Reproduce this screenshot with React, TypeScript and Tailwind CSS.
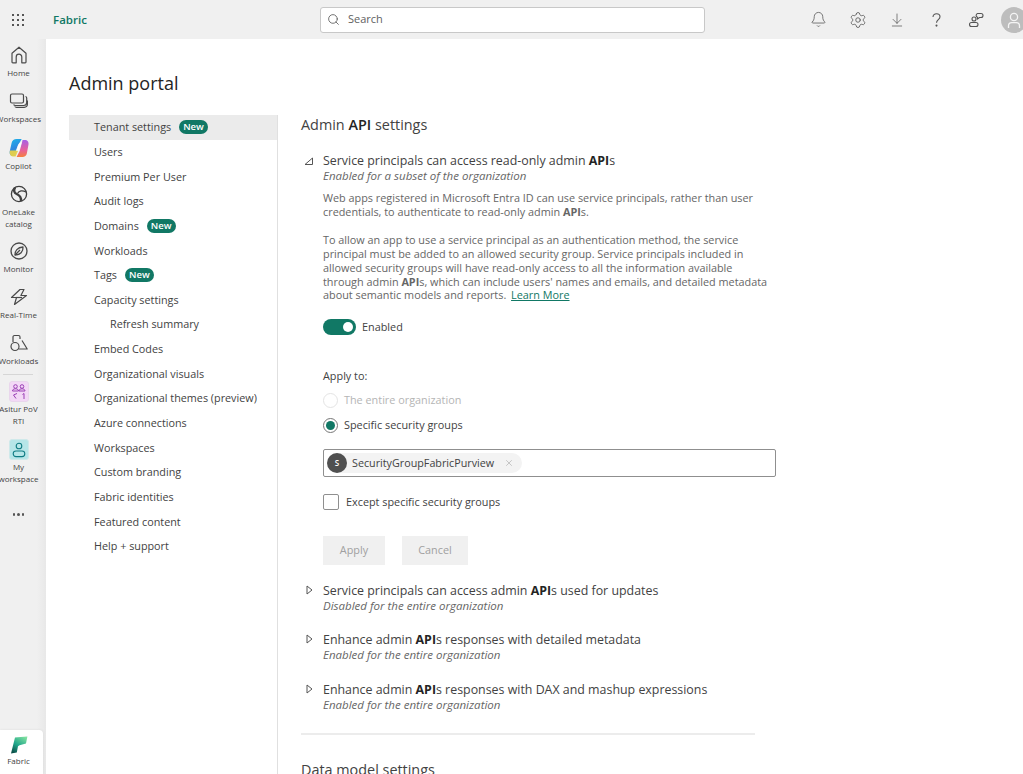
import { ArrowDownToLine, Bell, Search, Settings, X } from 'lucide-react';
import type { ReactNode } from 'react';

const font = { fontFamily: '"Open Sans", "Noto Sans", sans-serif' };

function HomeIcon() {
  return (
    <svg width="20" height="20" viewBox="0 0 20 20" fill="none" stroke="#4a4a4a" strokeWidth="1.2">
      <path d="M3 8.2 10 2.2l7 6V17a.8.8 0 0 1-.8.8h-3.4V12a2.8 2.8 0 0 0-5.6 0v5.8H3.8A.8.8 0 0 1 3 17z" strokeLinejoin="round" />
    </svg>
  );
}

function WorkspacesIcon() {
  return (
    <svg width="20" height="20" viewBox="0 0 20 20" fill="none" stroke="#4a4a4a" strokeWidth="1.2">
      <rect x="1.5" y="3" width="13" height="9" rx="1.5" />
      <path d="M16.5 5.5c.8.2 1.2.8 1.2 1.6v4.4c0 2-1 3-3 3H6.5c-1 0-1.6-.4-1.9-1.1" />
      <path d="M18.4 9.5v3.6c0 2-1.2 3.2-3.2 3.2H7.5c-.8 0-1.4-.3-1.8-.8" />
    </svg>
  );
}

function CopilotIcon() {
  return (
    <svg width="20" height="20" viewBox="0 0 20 20">
      <defs>
        <linearGradient id="cp1" x1="0.3" y1="0" x2="0.6" y2="1">
          <stop offset="0" stopColor="#1fb0e8" />
          <stop offset="0.55" stopColor="#2f86e0" />
          <stop offset="1" stopColor="#3ccf8e" />
        </linearGradient>
        <linearGradient id="cp2" x1="0.5" y1="0" x2="0.5" y2="1">
          <stop offset="0" stopColor="#a85ee6" />
          <stop offset="0.6" stopColor="#e8609a" />
          <stop offset="1" stopColor="#f6803c" />
        </linearGradient>
      </defs>
      <path d="M7.5 1h5.2L9 7.5 6 18H4C1.6 18 .2 16.2.7 13.5L2.6 5C3.2 2.4 5 1 7.5 1z" fill="url(#cp1)" />
      <path d="M13.6 2h2.2c2.6 0 4.2 2 3.7 4.6l-1.6 8.6c-.5 2.6-2.2 3.8-4.4 3.8H7.6l3.2-6.2z" fill="url(#cp2)" />
      <path d="M1 12.5h8.2L6.6 18.4H3.8C1.6 18.4.5 16.2.8 14z" fill="#e8cf4a" opacity="0.95" />
      <path d="M9 7c1-2 2-2.8 3.8-2.8l-2.8 8.6H6.8z" fill="#ffffff" opacity="0.85" />
    </svg>
  );
}

function OneLakeIcon() {
  return (
    <svg width="20" height="20" viewBox="0 0 20 20" fill="none" stroke="#3f3f3f" strokeWidth="1.3">
      <circle cx="10" cy="10" r="7.6" />
      <path d="M6 3.5c-1.6 3-.8 5.5 1.6 6.5 3 1.2 4.8 3.4 4.4 7.2" strokeWidth="2.4" />
      <path d="M8.5 9.5C10 6.5 13.5 6 17 8" />
    </svg>
  );
}

function MonitorIcon() {
  return (
    <svg width="20" height="20" viewBox="0 0 20 20" fill="none" stroke="#4a4a4a" strokeWidth="1.3">
      <circle cx="10" cy="10" r="8" />
      <path d="M6 14c-.4-4 2.6-7.6 8-8 .4 4.5-2.8 8-8 8z" strokeLinejoin="round" />
      <path d="M6 14l5-5" />
    </svg>
  );
}

function RealTimeIcon() {
  return (
    <svg width="20" height="20" viewBox="0 0 20 20" fill="none" stroke="#4a4a4a" strokeWidth="1.2" strokeLinejoin="round">
      <path d="M11 2.5 2.5 10.5h5L5.5 17.5 17.5 8.5h-5.6L15 2.5z" />
      <path d="M7 10.5h6" />
    </svg>
  );
}

function WorkloadsIcon() {
  return (
    <svg width="20" height="20" viewBox="0 0 20 20" fill="none" stroke="#4a4a4a" strokeWidth="1.2" strokeLinejoin="round">
      <path d="M4 9V4a1.5 1.5 0 0 1 1.5-1.5H9.5A1.5 1.5 0 0 1 11 4v2" />
      <circle cx="6" cy="13.5" r="4" />
      <path d="M13 7.5l5.2 8.5h-8.6" />
    </svg>
  );
}

const railLabel = 'text-[8px] leading-[12px] text-[#444] text-center whitespace-nowrap';

function RailItem({ icon, lines, className = '' }: { icon: ReactNode; lines: string[]; className?: string }) {
  return (
    <div className={`flex flex-col items-center ${className}`}>
      <div className="h-[22px] flex items-center justify-center">{icon}</div>
      <div className={`mt-[1px] ${railLabel}`}>
        {lines.map((l) => (
          <div key={l}>{l}</div>
        ))}
      </div>
    </div>
  );
}

function Rail() {
  return (
    <div className="w-[46px] shrink-0 bg-[linear-gradient(90deg,#f0f0f0_80%,#e8e8e8)] flex flex-col">
      <div className="pt-[5px] w-[37px] flex flex-col">
        <RailItem className="h-[46px]" icon={<HomeIcon />} lines={['Home']} />
        <RailItem className="h-[46.5px]" icon={<WorkspacesIcon />} lines={['Workspaces']} />
        <RailItem className="h-[46.5px]" icon={<CopilotIcon />} lines={['Copilot']} />
        <RailItem className="h-[57px]" icon={<OneLakeIcon />} lines={['OneLake', 'catalog']} />
        <RailItem className="h-[46px]" icon={<MonitorIcon />} lines={['Monitor']} />
        <RailItem className="h-[46px]" icon={<RealTimeIcon />} lines={['Real-Time']} />
        <RailItem className="h-[42px]" icon={<WorkloadsIcon />} lines={['Workloads']} />
        <div className="ml-[3px] w-[30px] border-t border-[#d6d6d6]" />
        <div className="mt-[6px] flex flex-col items-center h-[58px]">
          <div className="w-[20px] h-[21px] rounded-[3px] bg-[#f3d8f6] border border-[#e9d6ec] flex items-center justify-center">
            <svg width="16" height="17" viewBox="0 0 16 17" fill="none" stroke="#9a3fb5" strokeWidth="1">
              <circle cx="4.5" cy="3.5" r="1.8" />
              <circle cx="11" cy="3.5" r="1.8" />
              <path d="M1.5 8c0-1.4 1.2-2.2 3-2.2S7.5 6.6 7.5 8zM8 8c0-1.4 1.2-2.2 3-2.2S14 6.6 14 8z" />
              <path d="M6 10.5 2.5 12l2.5 3.5" />
              <path d="M11.5 11.5l1.5-1v5.5" />
            </svg>
          </div>
          <div className={`mt-[1px] ${railLabel}`}>
            <div>Asitur PoV</div>
            <div>RTI</div>
          </div>
        </div>
        <div className="flex flex-col items-center h-[58px]">
          <div className="w-[20px] h-[21px] rounded-[3px] bg-[#b6e6e8] border border-[#cfe9ea] flex items-center justify-center">
            <svg width="14" height="16" viewBox="0 0 14 16" fill="none" stroke="#0f7c83" strokeWidth="1.1">
              <circle cx="7" cy="4" r="2.8" />
              <rect x="1.2" y="9" width="11.6" height="5.6" rx="2.8" />
            </svg>
          </div>
          <div className={`mt-[1px] ${railLabel}`}>
            <div>My</div>
            <div>workspace</div>
          </div>
        </div>
        <div className="flex justify-center gap-[2px] mt-[16px]">
          <span className="w-[2.5px] h-[2.5px] rounded-full bg-[#555]" />
          <span className="w-[2.5px] h-[2.5px] rounded-full bg-[#555]" />
          <span className="w-[2.5px] h-[2.5px] rounded-full bg-[#555]" />
        </div>
      </div>
      <div className="mt-auto w-[43px] h-[44px] bg-white rounded-tr-[4px] pt-[6px] shadow-[0_0_3px_rgba(0,0,0,0.08)]">
        <div className="w-[37px] flex flex-col items-center">
          <svg width="18" height="18" viewBox="0 0 18 18">
            <defs>
              <linearGradient id="fb" x1="0.8" y1="0" x2="0.2" y2="1">
                <stop offset="0" stopColor="#7fe0a0" />
                <stop offset="0.55" stopColor="#1fa58a" />
                <stop offset="1" stopColor="#0b4f48" />
              </linearGradient>
            </defs>
            <path d="M5 1.5C8 1 13 .6 17.4.4L16 7.6 9.5 9.2 8 10.2 6.8 16.6 1 17.4z" fill="url(#fb)" />
          </svg>
          <div className="mt-[1px] text-[8px] leading-[12px] text-[#444]">Fabric</div>
        </div>
      </div>
    </div>
  );
}

function TopBar() {
  return (
    <div className="h-[39px] shrink-0 bg-[#f0f0f0] flex items-center">
      <div className="ml-[12px] grid grid-cols-[2px_2px_2px] gap-[3px]">
        {[0, 1, 2, 3, 4, 5, 6, 7, 8].map((i) => (
          <span key={i} className="w-[2px] h-[2px] bg-[#555]" />
        ))}
      </div>
      <div className="ml-[29px] w-[35px] text-[11.5px] font-semibold text-[#117865]">Fabric</div>
      <div className="ml-[232px] w-[385px] h-[26px] bg-white border border-[#c8c8c8] rounded-[3px] flex items-center px-[6px] gap-[8px]">
        <Search size={13} color="#555" strokeWidth={1.5} />
        <span className="text-[11px] text-[#616161]">Search</span>
      </div>
      <div className="ml-auto flex items-center text-[#555]">
        <div className="w-[39.5px] flex justify-center"><Bell size={17} strokeWidth={1.1} /></div>
        <div className="w-[39.5px] flex justify-center"><Settings size={18} strokeWidth={1.1} /></div>
        <div className="w-[39.5px] flex justify-center"><ArrowDownToLine size={16} strokeWidth={1.1} /></div>
        <div className="w-[39.5px] flex justify-center">
          <svg width="15" height="16" viewBox="0 0 15 16" fill="none" stroke="#555" strokeWidth="1.1">
            <path d="M4 5c0-2 1.5-3.2 3.5-3.2S11 3 11 4.8c0 2.8-3.5 3-3.5 6" />
            <circle cx="7.5" cy="13.6" r="0.5" fill="#555" />
          </svg>
        </div>
        <div className="w-[39.5px] flex justify-center">
          <svg width="16" height="16" viewBox="0 0 16 16" fill="none" stroke="#555" strokeWidth="1.1">
            <circle cx="6" cy="7" r="2" />
            <rect x="1.5" y="10.5" width="8.5" height="4" rx="2" />
            <path d="M9.5 1.5h3.5a2 2 0 0 1 0 4h-1.5L9.5 7V5.3A2 2 0 0 1 9.5 1.5z" />
          </svg>
        </div>
        <div className="ml-[5px] mr-[-4px] w-[26px] h-[26px] rounded-full bg-[#bdbdbd] flex items-center justify-center overflow-hidden">
          <svg width="16" height="20" viewBox="0 0 16 20" fill="none" stroke="#f4f4f4" strokeWidth="1.3">
            <circle cx="8" cy="7" r="3.6" />
            <path d="M2.5 18v-2c0-2 1.5-3.4 3.2-3.4h4.6c1.7 0 3.2 1.4 3.2 3.4v2" />
          </svg>
        </div>
      </div>
    </div>
  );
}

const navItems: { label: string; isNew?: boolean; sub?: boolean; active?: boolean }[] = [
  { label: 'Tenant settings', isNew: true, active: true },
  { label: 'Users' },
  { label: 'Premium Per User' },
  { label: 'Audit logs' },
  { label: 'Domains', isNew: true },
  { label: 'Workloads' },
  { label: 'Tags', isNew: true },
  { label: 'Capacity settings' },
  { label: 'Refresh summary', sub: true },
  { label: 'Embed Codes' },
  { label: 'Organizational visuals' },
  { label: 'Organizational themes (preview)' },
  { label: 'Azure connections' },
  { label: 'Workspaces' },
  { label: 'Custom branding' },
  { label: 'Fabric identities' },
  { label: 'Featured content' },
  { label: 'Help + support' },
];

function SideNav() {
  return (
    <div className="w-[209px] shrink-0 border-r border-[#e0e0e0] self-stretch">
      {navItems.map((item) => (
        <div
          key={item.label}
          className={`h-[24.67px] flex items-center gap-[8px] text-[10.8px] text-[#424242] whitespace-nowrap ${item.sub ? 'pl-[41px]' : 'pl-[25px]'} ${item.active ? 'bg-[#ebebeb]' : ''}`}
        >
          {item.label}
          {item.isNew && (
            <span className="h-[14px] px-[4px] rounded-full bg-[#117865] text-white text-[9.5px] font-semibold leading-[14px]">New</span>
          )}
        </div>
      ))}
    </div>
  );
}

function Title({ children }: { children: ReactNode }) {
  return <div className="text-[12.4px] leading-[16px] text-[#424242]">{children}</div>;
}

function Api() {
  return <b className="font-bold text-[#242424]">API</b>;
}

function Collapsed({ title, status }: { title: ReactNode; status: string }) {
  return (
    <div className="h-[49.5px] flex">
      <svg className="w-[22px] shrink-0 mt-[2px]" width="22" height="10" viewBox="0 0 22 10" fill="none" stroke="#555" strokeWidth="1">
        <path d="M6 1l5 4-5 4z" strokeLinejoin="round" />
      </svg>
      <div>
        <Title>{title}</Title>
        <div className="text-[11.5px] leading-[14px] italic text-[#666]">{status}</div>
      </div>
    </div>
  );
}

function Content() {
  return (
    <div className="ml-[23px] w-[475px]">
      <div className="text-[14.4px] leading-[20px] text-[#424242]">
        Admin <b className="font-semibold text-[#242424]">API</b> settings
      </div>
      <div className="mt-[18px] flex">
        <svg className="w-[22px] shrink-0 mt-[3px]" width="22" height="10" viewBox="0 0 22 10" fill="none" stroke="#555" strokeWidth="1">
          <path d="M4 8.5h7.5V2z" strokeLinejoin="round" />
        </svg>
        <div className="flex-1">
          <Title>
            Service principals can access read-only admin <Api />s
          </Title>
          <div className="text-[11.5px] leading-[14px] italic text-[#666]">Enabled for a subset of the organization</div>
          <div className="mt-[8px] text-[10.85px] leading-[13.9px] text-[#666]">
            Web apps registered in Microsoft Entra ID can use service principals, rather than user
            <br />
            credentials, to authenticate to read-only admin <b className="font-bold">API</b>s.
          </div>
          <div className="mt-[14px] text-[10.85px] leading-[13.9px] text-[#666]">
            To allow an app to use a service principal as an authentication method, the service
            <br />
            principal must be added to an allowed security group. Service principals included in
            <br />
            allowed security groups will have read-only access to all the information available
            <br />
            through admin <b className="font-bold">API</b>s, which can include users' names and emails, and detailed metadata
            <br />
            about semantic models and reports.{' '}
            <a className="ml-[2px] text-[#117865] underline">Learn More</a>
          </div>
          <div className="mt-[17px] flex items-center gap-[6px]">
            <div className="w-[33px] h-[16px] rounded-full bg-[#117865] flex items-center justify-end pr-[3px]">
              <span className="w-[10px] h-[10px] rounded-full bg-white" />
            </div>
            <span className="text-[10.85px] text-[#424242]">Enabled</span>
          </div>
          <div className="mt-[33px] text-[10.85px] leading-[14px] text-[#424242]">Apply to:</div>
          <div className="mt-[10px] flex items-center gap-[6px] h-[16px]">
            <span className="w-[15px] h-[15px] rounded-full border border-[#e4e4e4]" />
            <span className="text-[10.85px] text-[#b5b5b5]">The entire organization</span>
          </div>
          <div className="mt-[9px] flex items-center gap-[6px] h-[16px]">
            <span className="w-[15px] h-[15px] rounded-full border border-[#777] flex items-center justify-center">
              <span className="w-[9px] h-[9px] rounded-full bg-[#117865]" />
            </span>
            <span className="text-[10.85px] text-[#424242]">Specific security groups</span>
          </div>
          <div className="mt-[15.5px] w-[453px] h-[28px] border border-[#8f8f8f] rounded-[2px] flex items-center pl-[3px]">
            <div className="h-[20px] pr-[8px] rounded-full bg-[#f3f3f3] flex items-center">
              <span className="w-[20px] h-[20px] rounded-full bg-[#505050] text-white text-[8px] font-semibold flex items-center justify-center">S</span>
              <span className="ml-[5px] text-[10.75px] text-[#424242]">SecurityGroupFabricPurview</span>
              <X className="ml-[10px]" size={10} color="#999" strokeWidth={1.2} />
            </div>
          </div>
          <div className="mt-[16.5px] flex items-center gap-[7px]">
            <span className="w-[16px] h-[16px] rounded-[2px] border border-[#8f8f8f] bg-white" />
            <span className="text-[10.85px] text-[#424242]">Except specific security groups</span>
          </div>
          <div className="mt-[26px] flex gap-[17px]">
            <div className="w-[62px] h-[29px] bg-[#f0f0f0] text-[10.85px] text-[#a0a0a0] flex items-center justify-center">Apply</div>
            <div className="w-[66px] h-[29px] bg-[#f0f0f0] text-[10.85px] text-[#a0a0a0] flex items-center justify-center">Cancel</div>
          </div>
        </div>
      </div>
      <div className="mt-[18px]">
        <Collapsed title={<>Service principals can access admin <Api />s used for updates</>} status="Disabled for the entire organization" />
        <Collapsed title={<>Enhance admin <Api />s responses with detailed metadata</>} status="Enabled for the entire organization" />
        <Collapsed title={<>Enhance admin <Api />s responses with DAX and mashup expressions</>} status="Enabled for the entire organization" />
      </div>
      <div className="mt-[2px] w-[454px] border-t-2 border-[#ececec]" />
      <div className="mt-[25px] text-[14.4px] leading-[20px] text-[#424242]">Data model settings</div>
    </div>
  );
}

export default function App() {
  return (
    <div style={font} className="h-[774px] overflow-hidden flex flex-col bg-white">
      <TopBar />
      <div className="flex flex-1 min-h-0">
        <Rail />
        <div className="flex-1 min-w-0 pl-[23px] overflow-hidden">
          <div className="pt-[30px] text-[18px] leading-[28px] text-[#242424]">Admin portal</div>
          <div className="mt-[18px] flex h-[700px]">
            <SideNav />
            <Content />
          </div>
        </div>
      </div>
    </div>
  );
}
